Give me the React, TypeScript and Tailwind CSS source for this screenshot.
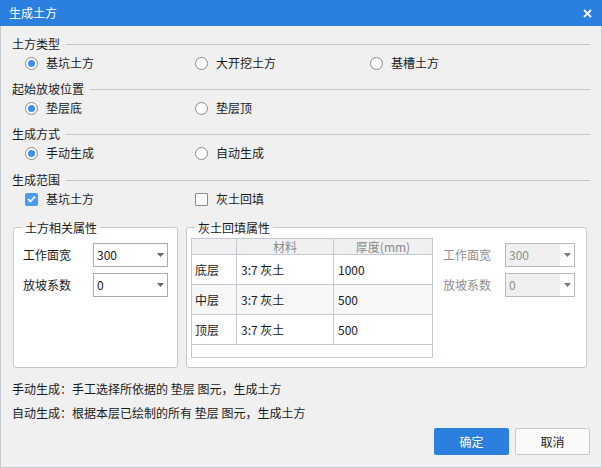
import React from "react";

const FONT = { fontFamily: '"Noto Sans CJK SC", "Microsoft YaHei", sans-serif' };

function Radio({ checked, label }: { checked?: boolean; label: string }) {
  return (
    <div className="flex items-center">
      <div className="w-[13px] h-[13px] rounded-full border border-[#8a8a8a] bg-white flex items-center justify-center">
        {checked && <div className="w-[7px] h-[7px] rounded-full bg-[#3d8ff0]" />}
      </div>
      <span className="ml-[8px] text-[12px] text-[#1a1a1a]">{label}</span>
    </div>
  );
}

function Check({ checked, label }: { checked?: boolean; label: string }) {
  return (
    <div className="flex items-center">
      {checked ? (
        <div className="w-[13px] h-[13px] rounded-[2px] bg-[#4a9cf2] flex items-center justify-center">
          <svg width="9" height="8" viewBox="0 0 9 8">
            <path d="M1 4.2 L3.5 6.5 L8 1.5" stroke="white" strokeWidth="1.8" fill="none" />
          </svg>
        </div>
      ) : (
        <div className="w-[13px] h-[13px] rounded-[1px] border border-[#8a8a8a] bg-white" />
      )}
      <span className="ml-[8px] text-[12px] text-[#1a1a1a]">{label}</span>
    </div>
  );
}

function Header({ label }: { label: string }) {
  return (
    <div className="h-[18px] flex items-center">
      <span className="text-[12px] text-[#1a1a1a]">{label}</span>
      <div className="flex-1 h-px bg-[#c6c6c6] ml-[6px]" />
    </div>
  );
}

function Arrow({ color }: { color: string }) {
  return (
    <svg width="7" height="4" viewBox="0 0 7 4">
      <path d="M0 0 L7 0 L3.5 4 Z" fill={color} />
    </svg>
  );
}

function Select({ value, width, disabled }: { value: string; width: string; disabled?: boolean }) {
  return (
    <div
      className={`${width} h-[24px] border flex items-stretch ${
        disabled ? "border-[#b9b9b9] bg-[#efefef]" : "border-[#ababab] bg-white"
      }`}
    >
      <div className={`flex-1 flex items-center pl-[3px] text-[12px] ${disabled ? "text-[#8e8e8e]" : "text-[#1a1a1a]"}`}>
        {value}
      </div>
      <div className={`w-[14px] flex items-center justify-center ${disabled ? "bg-white" : ""}`}>
        <Arrow color={disabled ? "#777" : "#666"} />
      </div>
    </div>
  );
}

function Group({ title, className, children }: { title: string; className: string; children: React.ReactNode }) {
  return (
    <div className={`relative border border-[#c9c9c9] rounded-[3px] bg-white ${className}`}>
      <span className="absolute left-[8px] top-[-9px] h-[18px] px-[3px] leading-[18px] text-[12px] text-[#1a1a1a] bg-[linear-gradient(to_bottom,#f0f0f0_50%,#ffffff_50%)]">
        {title}
      </span>
      {children}
    </div>
  );
}

export default function App() {
  const rows = [
    { n: "底层", m: "3:7 灰土", t: "1000", bg: "bg-white" },
    { n: "中层", m: "3:7 灰土", t: "500", bg: "bg-[#f7f7f7]" },
    { n: "顶层", m: "3:7 灰土", t: "500", bg: "bg-white" },
  ];
  return (
    <div className="w-[602px] h-[468px] bg-[#f0f0f0] flex flex-col" style={FONT}>
      <div className="h-[26px] bg-[#2b7fde] flex items-center justify-between pl-[9px] pr-[10px] shrink-0">
        <span className="text-[12px] text-white">生成土方</span>
        <svg width="9" height="9" viewBox="0 0 9 9">
          <path d="M1 1 L8 8 M8 1 L1 8" stroke="white" strokeWidth="1.8" />
        </svg>
      </div>
      <div className="flex-1 border-x border-b border-[#c3c9d3] px-[11px] pt-[9px] flex flex-col">
        <Header label="土方类型" />
        <div className="h-[20px] flex items-center pl-[13px] mb-[7px]">
          <div className="w-[170px]"><Radio checked label="基坑土方" /></div>
          <div className="w-[175px]"><Radio label="大开挖土方" /></div>
          <div><Radio label="基槽土方" /></div>
        </div>
        <Header label="起始放坡位置" />
        <div className="h-[20px] flex items-center pl-[13px] mb-[7px]">
          <div className="w-[170px]"><Radio checked label="垫层底" /></div>
          <div><Radio label="垫层顶" /></div>
        </div>
        <Header label="生成方式" />
        <div className="h-[20px] flex items-center pl-[13px] mb-[8px]">
          <div className="w-[170px]"><Radio checked label="手动生成" /></div>
          <div><Radio label="自动生成" /></div>
        </div>
        <Header label="生成范围" />
        <div className="h-[20px] flex items-center pl-[13px]">
          <div className="w-[170px]"><Check checked label="基坑土方" /></div>
          <div><Check label="灰土回填" /></div>
        </div>

        <div className="flex mt-[18px] ml-[1px] gap-[8px]">
          <Group title="土方相关属性" className="w-[165px] h-[141px] pt-[15px] pl-[9px]">
            <div className="flex items-center h-[24px]">
              <span className="w-[70px] text-[12px] text-[#1a1a1a]">工作面宽</span>
              <Select value="300" width="w-[75px]" />
            </div>
            <div className="flex items-center h-[24px] mt-[6px]">
              <span className="w-[70px] text-[12px] text-[#1a1a1a]">放坡系数</span>
              <Select value="0" width="w-[75px]" />
            </div>
          </Group>
          <Group title="灰土回填属性" className="w-[401px] h-[141px] pt-[10px] pl-[4px] flex">
            <div className="w-[242px] h-[120px] border border-[#c3c9d3] bg-white flex flex-col text-[12px]">
              <div className="h-[16px] bg-[#f0f0f0] border-b border-[#c3c9d3] grid grid-cols-[45px_97px_98px] text-[#8a8a8a]">
                <div className="border-r border-[#c3c9d3]" />
                <div className="border-r border-[#c3c9d3] flex items-center justify-center leading-none">材料</div>
                <div className="flex items-center justify-center leading-none">厚度(mm)</div>
              </div>
              {rows.map((r) => (
                <div key={r.n} className={`h-[30px] border-b border-[#c3c9d3] grid grid-cols-[45px_97px_98px] text-[#1a1a1a] ${r.bg}`}>
                  <div className="border-r border-[#c3c9d3] flex items-center pl-[3px]">{r.n}</div>
                  <div className="border-r border-[#c3c9d3] flex items-center pl-[4px]">{r.m}</div>
                  <div className="flex items-center pl-[4px]">{r.t}</div>
                </div>
              ))}
            </div>
            <div className="ml-[10px] pt-[5px]">
              <div className="flex items-center h-[24px]">
                <span className="w-[62px] text-[12px] text-[#8e8e8e]">工作面宽</span>
                <Select value="300" width="w-[70px]" disabled />
              </div>
              <div className="flex items-center h-[24px] mt-[6px]">
                <span className="w-[62px] text-[12px] text-[#8e8e8e]">放坡系数</span>
                <Select value="0" width="w-[70px]" disabled />
              </div>
            </div>
          </Group>
        </div>

        <div className="mt-[9px] text-[12px] leading-[24px] text-[#1a1a1a]">
          <div>手动生成：手工选择所依据的 垫层 图元，生成土方</div>
          <div>自动生成：根据本层已绘制的所有 垫层 图元，生成土方</div>
        </div>
        <div className="flex justify-end gap-[6px] mt-[3px]">
          <button className="w-[75px] h-[27px] rounded-[2px] bg-[#2b7fde] text-white text-[12px]">确定</button>
          <button className="w-[75px] h-[27px] rounded-[2px] bg-[#fafafa] border border-[#c3c9d3] text-[#1a1a1a] text-[12px]">取消</button>
        </div>
      </div>
    </div>
  );
}
